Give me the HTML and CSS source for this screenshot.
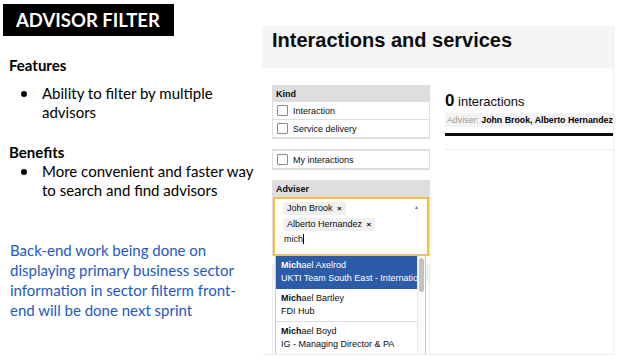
FILE: index.html
```html
<!DOCTYPE html>
<html lang="en">
<head>
  <meta charset="UTF-8">
  <title>Advisor Filter</title>
  <link rel="stylesheet" href="styles.css">
</head>
<body>
  <div class="slide">
    <div class="notes">
      <div class="title">ADVISOR FILTER</div>

      <h2 class="heading features">Features</h2>
      <ul class="points">
        <li>Ability to filter by multiple advisors</li>
      </ul>

      <h2 class="heading benefits">Benefits</h2>
      <ul class="points">
        <li>More convenient and faster way to search and find advisors</li>
      </ul>

      <p class="remark">Back-end work being done on displaying primary business sector information in sector filterm front-end will be done next sprint</p>
    </div>

    <div class="shot">
      <div class="shot-header">
        <h1>Interactions and services</h1>
      </div>
      <div class="shot-body">
        <div class="filters">
          <div class="filter">
            <div class="filter-head">Kind</div>
            <label class="filter-row"><span class="box"></span>Interaction</label>
            <label class="filter-row"><span class="box"></span>Service delivery</label>
          </div>

          <div class="filter plain">
            <label class="filter-row"><span class="box"></span>My interactions</label>
          </div>

          <div class="filter adviser">
            <div class="filter-head">Adviser</div>
            <div class="select">
              <div class="chips">
                <span class="chip">John Brook <b>&times;</b></span>
                <span class="chip">Alberto Hernandez <b>&times;</b></span>
              </div>
              <div class="typed">mich<span class="caret"></span></div>
              <span class="arrow">&#9650;</span>
            </div>
          </div>

          <!-- next filter, mostly covered by the open list -->
          <div class="filter covered">
            <div class="covered-head"></div>
            <div class="filter-row tall"></div>
          </div>

          <div class="menu">
            <div class="options">
              <div class="option active">
                <div class="name"><b>Mich</b>ael Axelrod</div>
                <div class="team">UKTI Team South East - International Trade</div>
              </div>
              <div class="option">
                <div class="name"><b>Mich</b>ael Bartley</div>
                <div class="team">FDI Hub</div>
              </div>
              <div class="option">
                <div class="name"><b>Mich</b>ael Boyd</div>
                <div class="team">IG - Managing Director &amp; PA</div>
              </div>
            </div>
            <div class="scrollbar"><span class="thumb"></span></div>
          </div>
        </div>

        <div class="results">
          <div class="count"><strong>0</strong> interactions</div>
          <div class="summary"><span>Adviser:</span> <b>John Brook, Alberto Hernandez</b></div>
          <div class="rule"></div>
          <div class="thin-rule"></div>
        </div>
      </div>
    </div>
  </div>
</body>
</html>
```

FILE: styles.css
```css
body {
  margin: 0;
  background: #fff;
}

.slide {
  width: 620px;
  height: 360px;
  display: flex;
  overflow: hidden;
}

/* left half: slide notes */
.notes {
  width: 262px;
  flex-shrink: 0;
  font-family: Lato, "Open Sans", sans-serif;
  color: #000;
}

.title {
  margin: 4px 0 0 3px;
  width: 158px;
  height: 32px;
  padding-left: 13px;
  background: #000;
  color: #fff;
  font-weight: bold;
  font-size: 18.5px;
  line-height: 33px;
}

.heading {
  margin: 0 0 0 9px;
  font-size: 15px;
  font-weight: bold;
  line-height: 18px;
}

.features {
  margin-top: 20px;
}

.benefits {
  margin-top: 21px;
}

.points {
  margin: 0;
  padding: 0 0 0 42px;
  list-style: none;
  width: 222px;
}

.features + .points {
  margin-top: 10px;
}

.benefits + .points {
  margin-top: 1px;
}

.points li {
  position: relative;
  font-size: 15px;
  line-height: 19px;
}

.points li::before {
  content: "";
  position: absolute;
  left: -21px;
  top: 7px;
  width: 6px;
  height: 6px;
  border-radius: 50%;
  background: #000;
}

.remark {
  margin: 40px 0 0 10px;
  width: 245px;
  color: #2458c2;
  font-size: 15px;
  line-height: 20px;
}

/* right half: app screenshot */
.shot {
  margin-top: 26px;
  width: 351px;
  height: 328px;
  border-right: 1px solid #ececec;
  border-bottom: 1px solid #ececec;
  font-family: "Liberation Sans", Arial, sans-serif;
  overflow: hidden;
}

.shot-header {
  height: 42px;
  background: #f5f5f5;
  padding-left: 10px;
}

.shot-header h1 {
  margin: 0;
  padding-top: 3px;
  font-size: 20px;
  line-height: 22px;
  color: #0b0c0c;
}

.shot-body {
  display: flex;
  gap: 15px;
  padding: 17px 0 0 10px;
}

.filters {
  width: 158px;
  flex-shrink: 0;
  position: relative;
}

.filter {
  background: #dedede;
  padding: 0 1px 2px;
  margin-bottom: 10px;
}

.filter.plain {
  padding-top: 2px;
}

.filter-head {
  font-size: 9px;
  font-weight: bold;
  padding: 4px 3px 3px;
  color: #0b0c0c;
}

.filter-row {
  display: flex;
  align-items: center;
  height: 17px;
  background: #fff;
  font-size: 9px;
  color: #0b0c0c;
}

.filter-row + .filter-row {
  margin-top: 1px;
}

.filter-row.tall {
  height: 100px;
}

.box {
  width: 9px;
  height: 9px;
  border: 1px solid #8a8a8a;
  border-radius: 1px;
  margin: 0 5px 0 4px;
  background: #fff;
}

.adviser {
  padding: 0 1px 0;
  margin-bottom: 8px;
}

.select {
  position: relative;
  height: 52px;
  background: #fff;
  border: 2px solid #f7bd45;
  padding: 3px 0 0 8px;
  font-size: 9px;
  color: #0b0c0c;
}

.chips {
  display: flex;
  flex-direction: column;
  align-items: flex-start;
  gap: 3px;
}

.chip {
  background: #f0f0f0;
  padding: 1px 4px;
  line-height: 11px;
}

.chip b {
  font-size: 8px;
  margin-left: 2px;
}

.typed {
  margin-top: 3px;
  padding-left: 1px;
  line-height: 11px;
}

.caret {
  display: inline-block;
  width: 1px;
  height: 10px;
  background: #000;
  vertical-align: -2px;
}

.arrow {
  position: absolute;
  right: 8px;
  top: 5px;
  font-size: 5px;
  color: #777;
}

.covered {
  background: #eeeeee;
}

.covered-head {
  height: 17px;
}

/* dropdown list lies over the next filter */
.menu {
  position: absolute;
  left: 3px;
  right: 4px;
  top: 170px;
  height: 110px;
  display: flex;
  background: #fff;
  border: 1px solid #c8c8c8;
  z-index: 2;
}

.options {
  flex: 1;
  overflow: hidden;
}

.option {
  padding: 3px 5px 3px;
  font-size: 9px;
  line-height: 13px;
  color: #0b0c0c;
  white-space: nowrap;
  border-bottom: 1px solid #dcdcdc;
}

.option.active {
  background: #2d5ba8;
  color: #fff;
  border-bottom-color: #2d5ba8;
}

.scrollbar {
  width: 7px;
  background: #fafafa;
  border-left: 1px solid #e6e6e6;
}

.thumb {
  display: block;
  margin: 2px 1px 0;
  height: 34px;
  border-radius: 3px;
  background: #c2c2c2;
}

.results {
  flex: 1;
}

.count {
  margin-top: 6px;
  font-size: 13px;
  color: #0b0c0c;
}

.count strong {
  font-size: 17px;
}

.summary {
  margin-top: 2px;
  background: #f3f3f3;
  padding: 2px 2px;
  font-size: 8.8px;
  line-height: 10px;
  white-space: nowrap;
}

.summary span {
  color: #9a9a9a;
}

.rule {
  margin-top: 6px;
  height: 3px;
  background: #0b0c0c;
}

.thin-rule {
  margin-top: 13px;
  height: 1px;
  background: #ededed;
}
```
